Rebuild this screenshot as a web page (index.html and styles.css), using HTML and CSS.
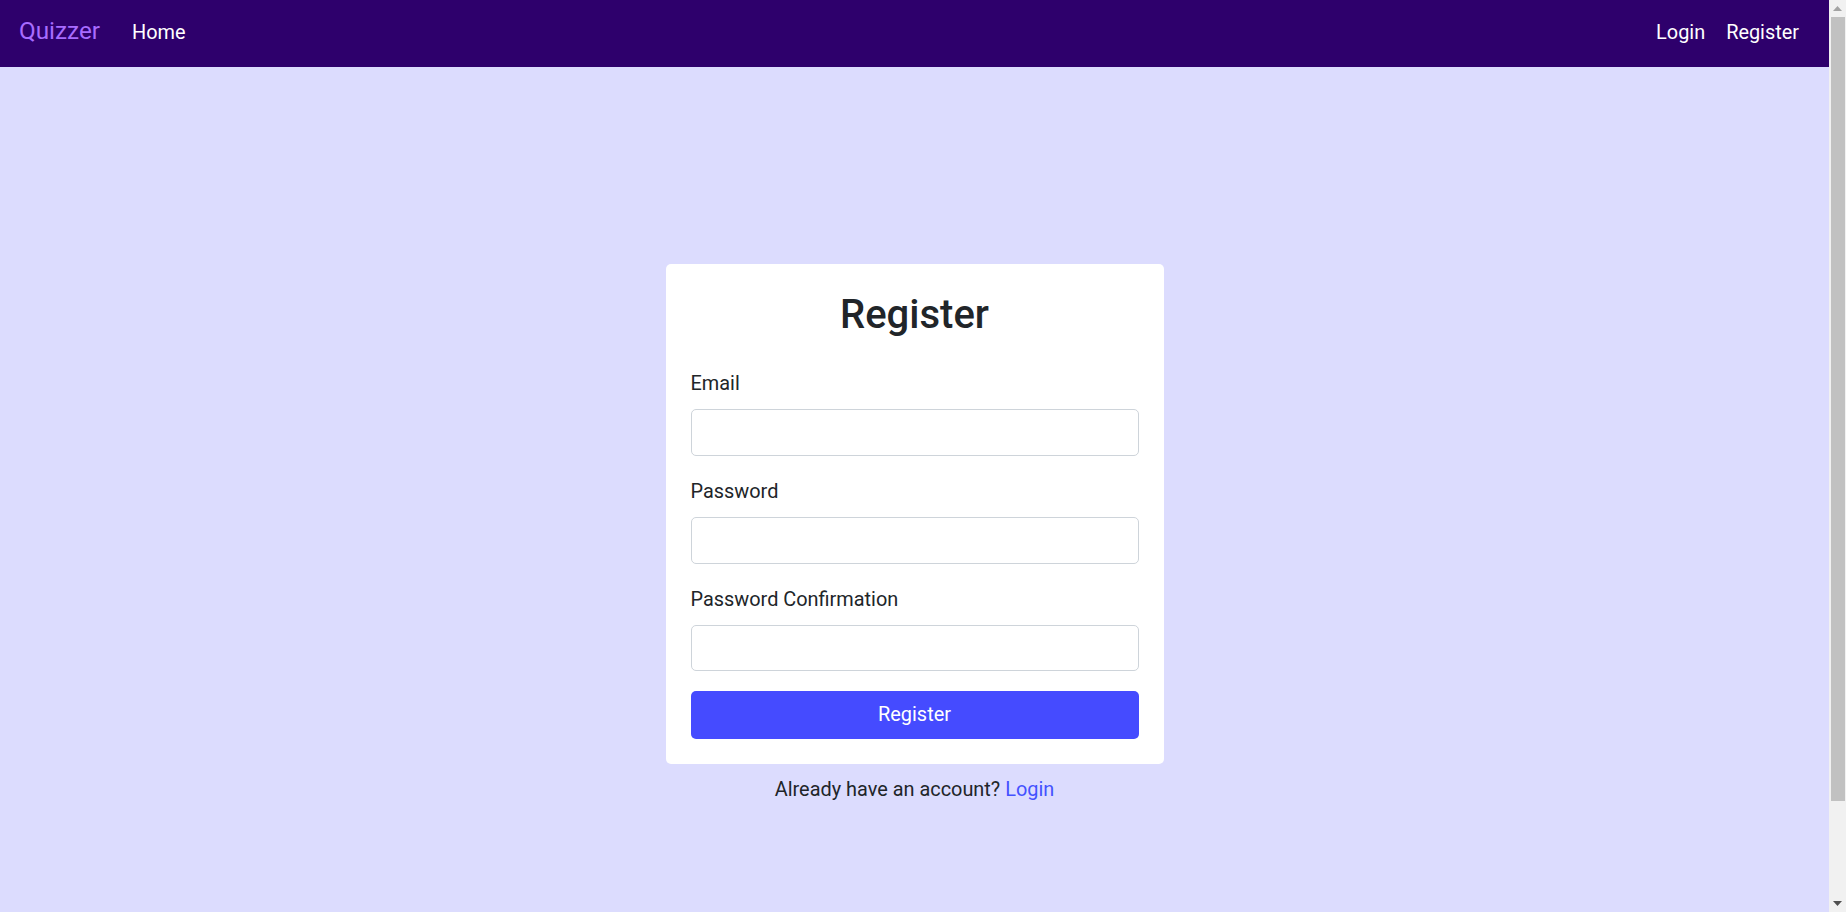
FILE: index.html
```html
<!DOCTYPE html>
<html lang="en">
<head>
<meta charset="utf-8">
<title>Quizzer - Register</title>
<link rel="stylesheet" href="styles.css">
</head>
<body>
<nav class="navbar">
  <a class="brand" href="#">Quizzer</a>
  <a class="nav-link home" href="#">Home</a>
  <div class="nav-right">
    <a class="nav-link" href="#">Login</a>
    <a class="nav-link" href="#">Register</a>
  </div>
</nav>
<main class="main">
  <form class="card">
    <h2 class="title">Register</h2>
    <div class="group">
      <label class="label" for="email">Email</label>
      <input class="input" id="email" type="email">
    </div>
    <div class="group">
      <label class="label" for="pw">Password</label>
      <input class="input" id="pw" type="password">
    </div>
    <div class="group">
      <label class="label" for="pw2">Password Confirmation</label>
      <input class="input" id="pw2" type="password">
    </div>
    <button class="btn" type="button">Register</button>
  </form>
  <p class="footer-text">Already have an account? <a class="link" href="#">Login</a></p>
</main>
<div class="scrollbar" aria-hidden="true">
  <svg class="arrow up" width="17" height="17" viewBox="0 0 17 17"><polygon points="4,11 13,11 8.5,6" fill="#a3a3a3"/></svg>
  <div class="thumb"></div>
  <svg class="arrow down" width="17" height="17" viewBox="0 0 17 17"><polygon points="4,6 13,6 8.5,11" fill="#505050"/></svg>
</div>
</body>
</html>
```
FILE: styles.css
```css
* { box-sizing: border-box; }
html, body { margin: 0; padding: 0; }
body {
  font-family: Roboto, "Liberation Sans", Arial, sans-serif;
  font-size: 19.9px;
  line-height: 28.8px;
  color: #212529;
  background: #dcdcfe;
  padding-right: 17px;
}
a { text-decoration: none; }

.navbar {
  height: 67px;
  background: #2e006c;
  display: flex;
  align-items: baseline;
  padding: 19px 30px 0 19px;
}
.brand {
  font-size: 24.3px;
  line-height: 24px;
  color: #a86cff;
  margin-right: 32px;
}
.nav-link {
  color: #fff;
  font-size: 19.9px;
  line-height: 28.8px;
}
.nav-right {
  margin-left: auto;
  display: flex;
  gap: 21px;
  align-items: baseline;
}

.main {
  display: flex;
  flex-direction: column;
  align-items: center;
  padding: 197px 0 219px;
}
.card {
  width: 498px;
  background: #fff;
  border-radius: 5px;
  padding: 27px 25px 25px;
  margin: 0;
}
.title {
  margin: 0 0 31px;
  font-size: 40px;
  line-height: 48px;
  font-weight: 500;
  text-align: center;
}
.group { margin-bottom: 22px; }
.group:last-of-type { margin-bottom: 20px; }
.label {
  display: block;
  margin-bottom: 10.5px;
}
.input {
  display: block;
  width: 100%;
  height: 46.5px;
  border: 1px solid #ced4da;
  border-radius: 5px;
  background: #fff;
  font: inherit;
  padding: 0 14px;
}
.btn {
  display: block;
  width: 100%;
  height: 47.7px;
  border: 0;
  border-radius: 5px;
  background: #454bff;
  color: #fff;
  font: inherit;
  cursor: pointer;
}
.footer-text {
  margin: 12px 0 0;
  text-align: center;
}
.link { color: #4452ff; }

.scrollbar {
  position: fixed;
  top: 0;
  right: 0;
  width: 17px;
  height: 100vh;
  background: #f1f1f1;
  display: flex;
  flex-direction: column;
}
.arrow { display: block; flex: none; }
.thumb {
  flex: none;
  height: 784px;
  margin: 0 1px 0 2px;
  background: #c1c1c1;
}
.arrow.down { margin-top: auto; }
```
